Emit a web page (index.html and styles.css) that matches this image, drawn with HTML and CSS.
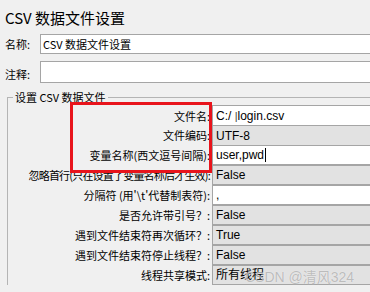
FILE: index.html
```html
<!DOCTYPE html>
<html lang="zh-CN">
<head>
    <meta charset="UTF-8">
    <title>CSV 数据文件设置</title>
    <link rel="stylesheet" href="styles.css">
</head>
<body>
    <div class="title">CSV 数据文件设置</div>

    <div class="top-row">
        <label class="top-label">名称:</label>
        <div class="box name-box">CSV 数据文件设置</div>
    </div>
    <div class="top-row notes">
        <label class="top-label">注释:</label>
        <div class="box notes-box"></div>
    </div>

    <fieldset class="group">
        <legend>设置 CSV 数据文件</legend>
        <div class="grid">
            <div class="lbl first">文件名:</div>
            <div class="box val edit first">C:/ <span class="mark">|</span>login.csv</div>

            <div class="lbl second">文件编码:</div>
            <div class="box val combo second">UTF-8</div>

            <div class="lbl">变量名称(西文逗号间隔):</div>
            <div class="box val edit"><span class="caret">user,pwd</span></div>

            <div class="lbl long">忽略首行(只在设置了变量名称后才生效):</div>
            <div class="box val combo">False</div>

            <div class="lbl">分隔符 (用'\t'代替制表符):</div>
            <div class="box val edit">,</div>

            <div class="lbl">是否允许带引号？:</div>
            <div class="box val combo">False</div>

            <div class="lbl">遇到文件结束符再次循环？:</div>
            <div class="box val combo">True</div>

            <div class="lbl">遇到文件结束符停止线程？:</div>
            <div class="box val combo">False</div>

            <div class="lbl">线程共享模式:</div>
            <div class="box val combo">所有线程</div>
        </div>
    </fieldset>

    <!-- annotation drawn over the screenshot -->
    <div class="highlight"></div>
    <div class="watermark">CSDN @清风324</div>
</body>
</html>
```

FILE: styles.css
```css
body {
    margin: 0;
    background-color: #f0f0f0;
    font-family: "Noto Sans CJK SC", "Liberation Sans", sans-serif;
    font-size: 11px;
    color: #000;
    width: 370px;
    height: 292px;
    overflow: hidden;
    position: relative;
}

.title {
    padding: 8px 5px 6px;
    font-size: 15px;
    line-height: 20px;
}

.top-row {
    display: flex;
    height: 20px;
}

.top-row.notes {
    margin-top: 7px;
    height: 22px;
}

.top-label {
    width: 40px;
    padding-left: 5px;
    line-height: 20px;
    box-sizing: border-box;
}

.notes .top-label {
    line-height: 26px;
}

.box {
    box-sizing: border-box;
    border: 1px solid #a5a5a5;
    background: #fff;
}

.name-box {
    flex: 1;
    margin-right: -10px;
    padding-left: 2px;
    line-height: 18px;
    font-size: 11px;
}

.notes-box {
    flex: 1;
    margin-right: -10px;
}

.group {
    margin: 7px -20px 0 7px;
    padding: 1px 0 0 0;
    border: 1px solid #b4b4b4;
    border-bottom: none;
    min-width: 0;
}

.group legend {
    margin-left: 5px;
    padding: 0 2px;
    line-height: 14px;
    font-size: 11px;
}

.grid {
    display: grid;
    grid-template-columns: 204px 1fr;
    grid-auto-rows: 20px;
}

.grid .first {
    height: 23px;
}

.grid .second {
    height: 22px;
}

.lbl {
    text-align: right;
    padding-right: 2px;
    line-height: 20px;
    white-space: nowrap;
}

.lbl.first {
    line-height: 23px;
}

.lbl.long {
    letter-spacing: -0.8px;
}

.val {
    padding-left: 3px;
    font-family: "Liberation Sans", "Noto Sans CJK SC", sans-serif;
    font-size: 12px;
    line-height: 18px;
}

.val.first {
    line-height: 21px;
}

.val.second {
    line-height: 20px;
}

.edit {
    background: #fff;
}

.combo {
    background: #e2e2e2;
}

.mark {
    color: #444;
    font-size: 11px;
}

.caret {
    border-right: 1px solid #000;
    padding-right: 1px;
}

.highlight {
    position: absolute;
    left: 70px;
    top: 102px;
    width: 142px;
    height: 71px;
    border: 3px solid #e8141c;
    box-sizing: border-box;
}

.watermark {
    position: absolute;
    left: 245px;
    top: 266px;
    font-family: "Liberation Sans", "Noto Sans CJK SC", sans-serif;
    font-size: 14px;
    color: rgba(150, 150, 150, 0.6);
    text-shadow: 0 0 1px rgba(255, 255, 255, 0.8);
    white-space: nowrap;
}
```
